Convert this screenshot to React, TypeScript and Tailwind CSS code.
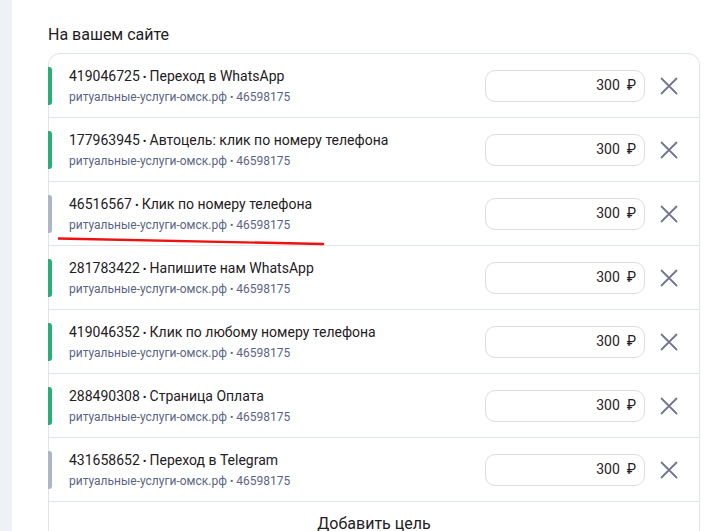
import React from "react";

type Goal = { id: string; name: string; active: boolean };

const goals: Goal[] = [
  { id: "419046725", name: "Переход в WhatsApp", active: true },
  { id: "177963945", name: "Автоцель: клик по номеру телефона", active: true },
  { id: "46516567", name: "Клик по номеру телефона", active: false },
  { id: "281783422", name: "Напишите нам WhatsApp", active: true },
  { id: "419046352", name: "Клик по любому номеру телефона", active: true },
  { id: "288490308", name: "Страница Оплата", active: true },
  { id: "431658652", name: "Переход в Telegram", active: false },
];

function CloseIcon() {
  return (
    <svg width="18" height="18" viewBox="0 0 18 18" fill="none">
      <path d="M1.5 1.5 L16.5 16.5 M16.5 1.5 L1.5 16.5" stroke="#6f7891" strokeWidth="1.8" strokeLinecap="round" />
    </svg>
  );
}

function Row({ g }: { g: Goal }) {
  return (
    <div className="flex items-center h-[64px] border-b border-[#e1e5ec]">
      <div className={`-ml-px w-[4px] h-[38px] rounded-r-[3px] ${g.active ? "bg-[#2aae78]" : "bg-[#aeb6c6]"}`} />
      <div className="ml-[17px] flex flex-col pt-[1px]">
        <div className="text-[14px] leading-[18px] text-[#1f2023]">
          {g.id}<span className="mx-[3px] text-[11px]">•</span>{g.name}
        </div>
        <div className="mt-[2px] text-[12px] leading-[16px] text-[#5b6583]">
          ритуальные-услуги-омск.рф<span className="mx-[3px] text-[10px]">•</span>46598175
        </div>
      </div>
      <div className="ml-auto flex h-[32px] w-[160px] items-center justify-end rounded-[10px] border border-[#dadde6] pr-[8px] text-[14px] text-[#1f2023]">
        300&nbsp;&nbsp;₽
      </div>
      <div className="ml-[15px] mr-[21px] flex h-[18px] w-[18px] items-center justify-center">
        <CloseIcon />
      </div>
    </div>
  );
}

export default function App() {
  return (
    <div className="flex h-[531px] w-[706px] overflow-hidden bg-white" style={{ fontFamily: "Roboto, 'Noto Sans', sans-serif" }}>
      <div className="w-[12px] shrink-0 bg-[#eef1f7]" />
      <div className="relative flex-1 pl-[36px] pr-[6px]">
        <div className="pt-[25px] text-[16px] leading-[20px] text-[#1f2023]">На вашем сайте</div>
        <div className="mt-[8px] rounded-[12px] border border-[#dfe3ea]">
          {goals.map((g) => (
            <Row key={g.id} g={g} />
          ))}
          <div className="flex h-[48px] justify-center pt-[12px] text-[16px] leading-[20px] text-[#1f2023]">Добавить цель</div>
        </div>
        <svg className="pointer-events-none absolute left-[46px] top-[236px]" width="270" height="12" viewBox="0 0 270 12">
          <path d="M0 2.5 C 90 4, 180 5.5, 265 8" stroke="#ee1111" strokeWidth="2.4" fill="none" strokeLinecap="round" />
        </svg>
      </div>
    </div>
  );
}
